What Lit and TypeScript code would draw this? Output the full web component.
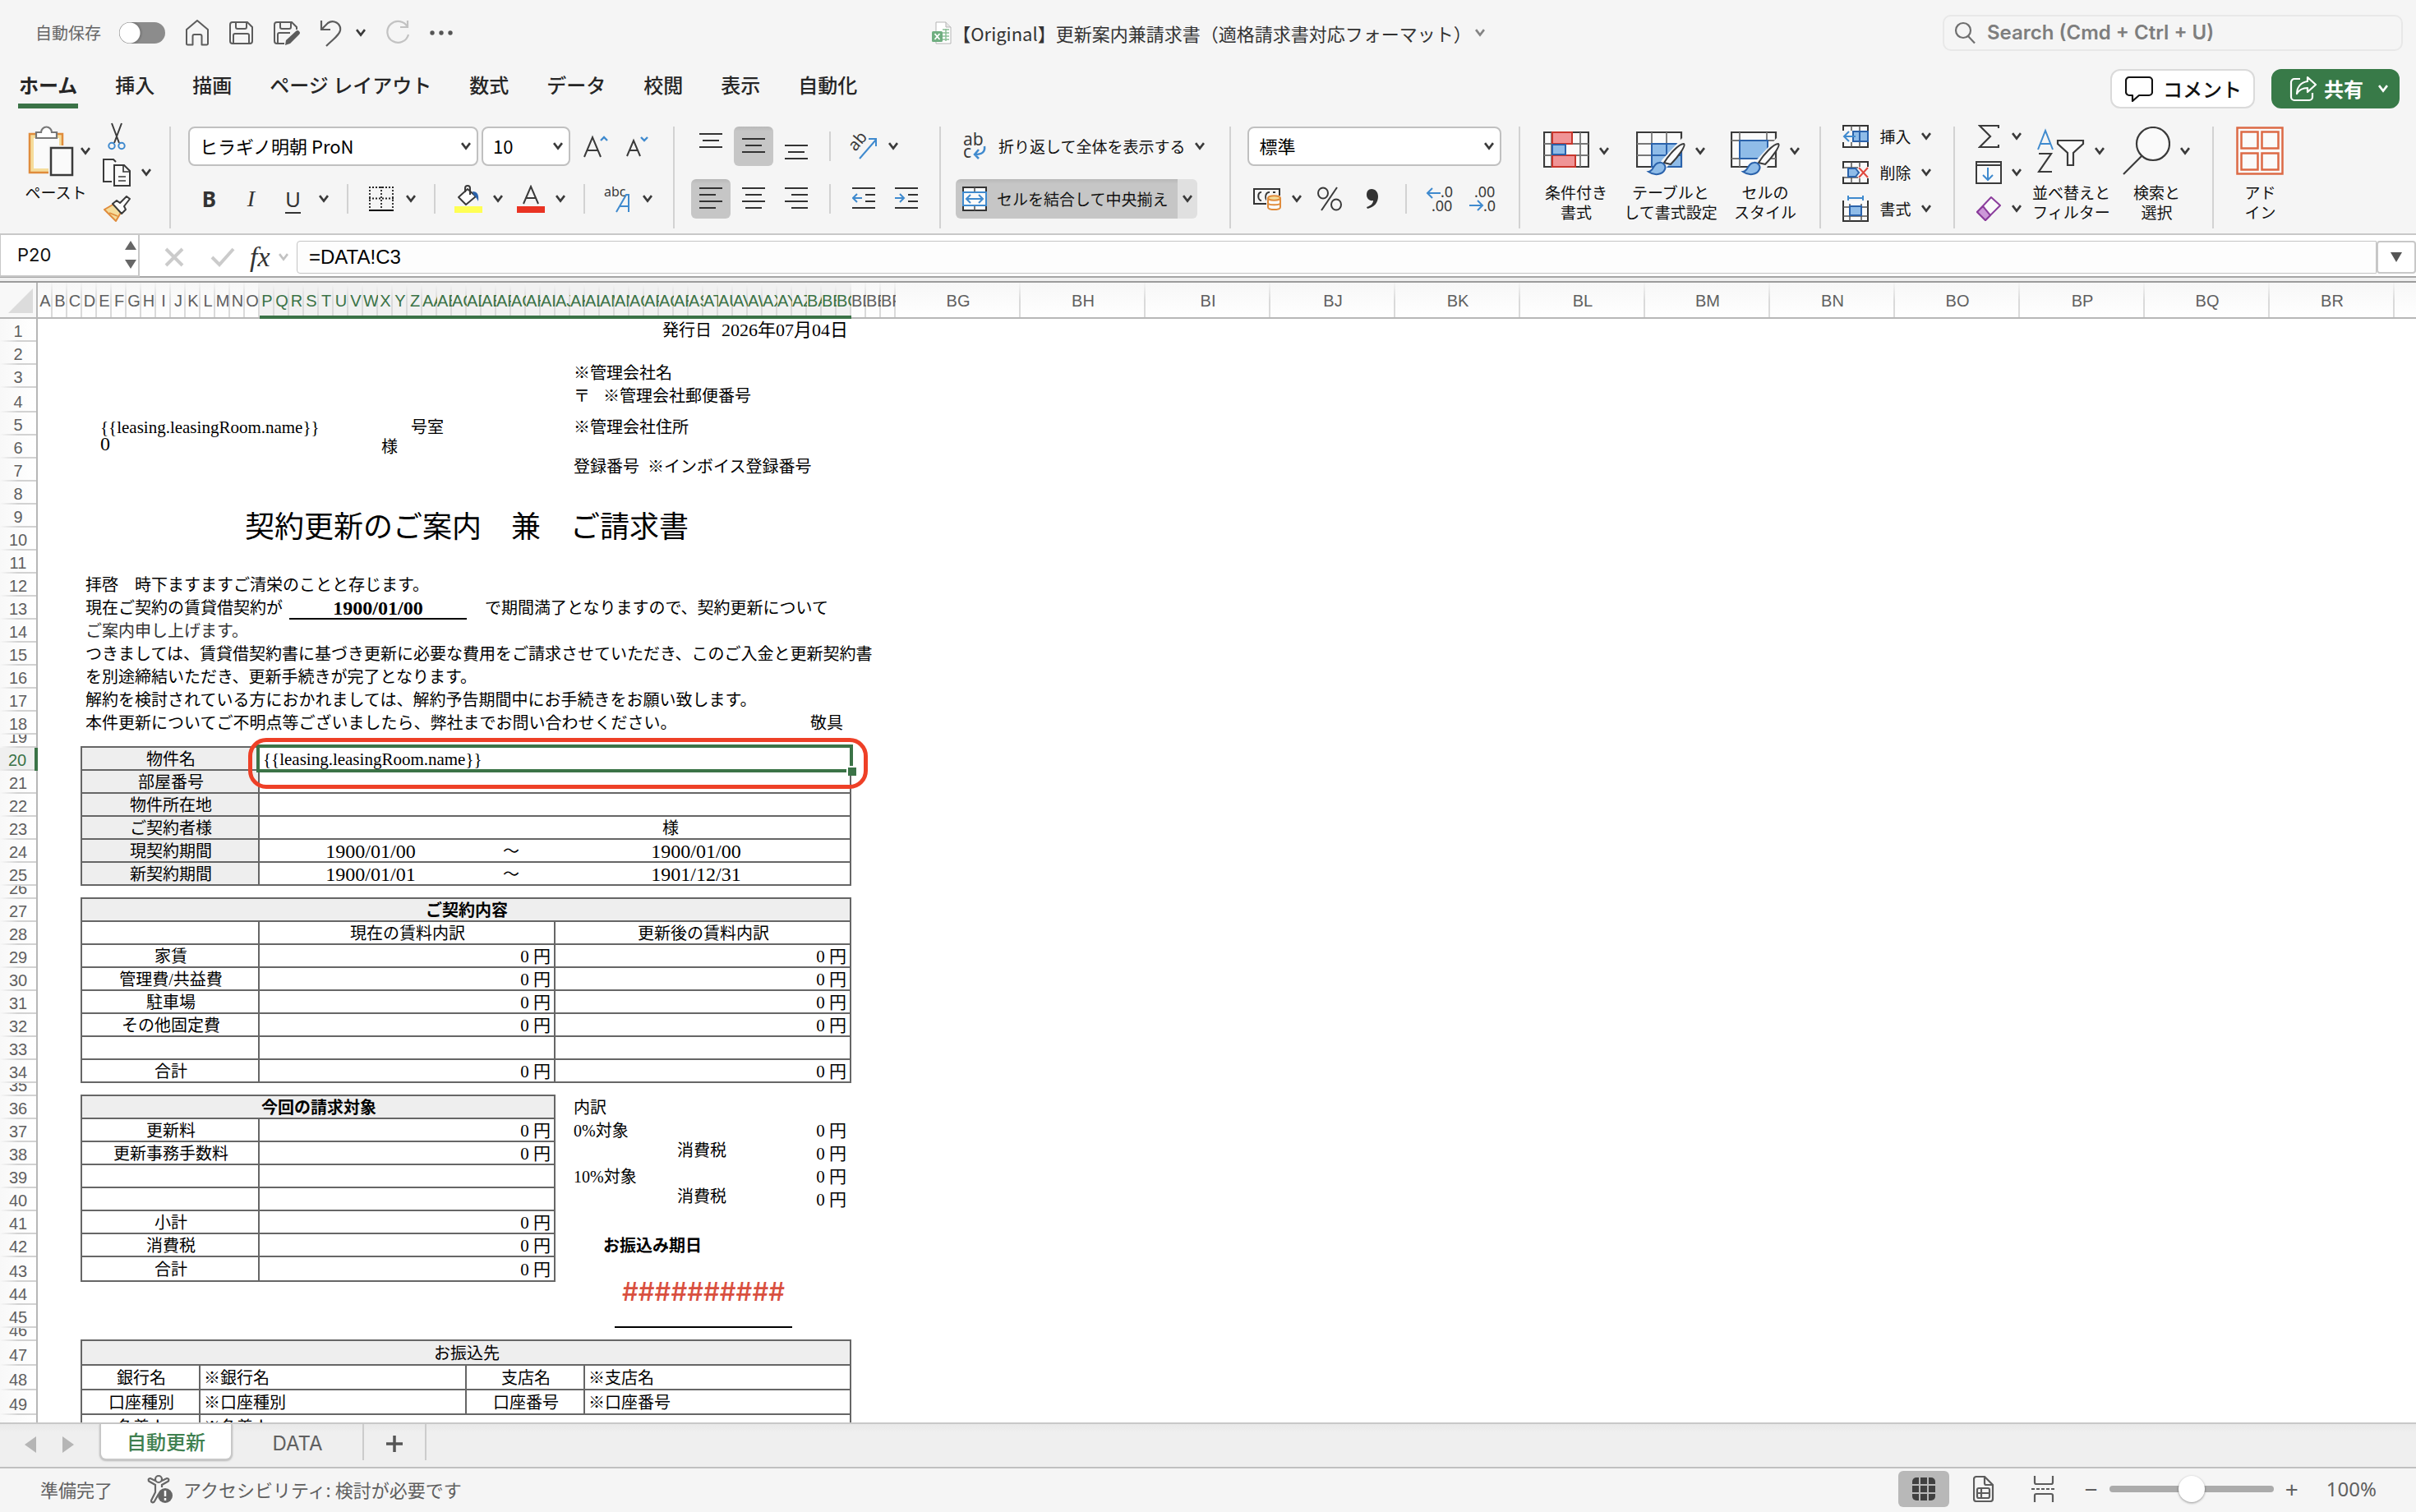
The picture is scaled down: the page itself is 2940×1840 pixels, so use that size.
import { LitElement, css, html, nothing } from 'lit'
import { customElement, property, state } from 'lit/decorators.js'
import { classMap } from 'lit/directives/class-map.js'

type Cell = {
  row: number
  from: number
  to: number
  text: string
  kind?: string
  rows?: number
}

const NARROW_COUNT = 58
const NARROW = 18
const WIDE_COUNT = 13
const WIDE = 152
const HEAD = 46
const ROW_COUNT = 50
const SHORT_ROWS = [19, 26, 35, 46]
const TALL_ROWS = [4, 43, 47, 48, 49, 50]
const ACTIVE = { row: 20, from: 15, to: 55 }

const tabs = ['ホーム', '挿入', '描画', 'ページ レイアウト', '数式', 'データ', '校閲', '表示', '自動化']

function c(row: number, from: number, to: number, text: string, kind = '', rows = 1): Cell {
  return { row, from, to, text, kind, rows }
}

function yenRow(row: number, label: string, amounts: boolean): Cell[] {
  const text = amounts ? '0 円' : ''
  return [
    c(row, 3, 15, label, 'box center'),
    c(row, 15, 35, text, 'box right latin'),
    c(row, 35, 55, text, 'box right latin'),
  ]
}

function billRow(row: number, label: string, amounts: boolean): Cell[] {
  return yenRow(row, label, amounts).slice(0, 2)
}

const cells: Cell[] = [
  c(1, 42, 46, '発行日'),
  c(1, 46, 55, '2026年07月04日', 'right issued'),
  c(3, 36, 55, '※管理会社名', 'top'),
  c(4, 36, 38, '〒', 'top'),
  c(4, 38, 55, '※管理会社郵便番号', 'top'),
  c(5, 4, 25, '{{leasing.leasingRoom.name}}', 'bottom latin'),
  c(5, 25, 36, '号室', 'bottom'),
  c(5, 36, 55, '※管理会社住所', 'bottom'),
  c(6, 4, 23, '0', 'top date'),
  c(6, 23, 36, '様'),
  c(7, 36, 41, '登録番号', 'top'),
  c(7, 41, 55, '※インボイス登録番号', 'top'),
  c(9, 3, 55, '契約更新のご案内　兼　ご請求書', 'center title', 2),
  c(12, 3, 55, '拝啓　時下ますますご清栄のことと存じます。'),
  c(13, 3, 17, '現在ご契約の賃貸借契約が'),
  c(13, 17, 29, '1900/01/00', 'center date bold under'),
  c(13, 30, 55, 'で期間満了となりますので、契約更新について'),
  c(14, 3, 55, 'ご案内申し上げます。', 'soft'),
  c(15, 3, 55, 'つきましては、賃貸借契約書に基づき更新に必要な費用をご請求させていただき、このご入金と更新契約書'),
  c(16, 3, 55, 'を別途締結いただき、更新手続きが完了となります。'),
  c(17, 3, 55, '解約を検討されている方におかれましては、解約予告期間中にお手続きをお願い致します。'),
  c(18, 3, 52, '本件更新についてご不明点等ございましたら、弊社までお問い合わせください。'),
  c(18, 52, 55, '敬具'),

  c(20, 3, 15, '物件名', 'box fill center'),
  c(20, 15, 55, '{{leasing.leasingRoom.name}}', 'box latin'),
  c(21, 3, 15, '部屋番号', 'box fill center'),
  c(21, 15, 55, '', 'box'),
  c(22, 3, 15, '物件所在地', 'box fill center'),
  c(22, 15, 55, '', 'box'),
  c(23, 3, 15, 'ご契約者様', 'box fill center'),
  c(23, 15, 42, '', 'row-line'),
  c(23, 42, 55, '様', 'row-line end-line'),
  c(24, 3, 15, '現契約期間', 'box fill center'),
  c(24, 15, 30, '1900/01/00', 'row-line center date'),
  c(24, 30, 34, '〜', 'row-line center'),
  c(24, 34, 55, '1900/01/00', 'row-line end-line center date'),
  c(25, 3, 15, '新契約期間', 'box fill center'),
  c(25, 15, 30, '1900/01/01', 'row-line center date'),
  c(25, 30, 34, '〜', 'row-line center'),
  c(25, 34, 55, '1901/12/31', 'row-line end-line center date'),

  c(27, 3, 55, 'ご契約内容', 'box fill center bold'),
  c(28, 3, 15, '', 'box'),
  c(28, 15, 35, '現在の賃料内訳', 'box center'),
  c(28, 35, 55, '更新後の賃料内訳', 'box center'),
  ...yenRow(29, '家賃', true),
  ...yenRow(30, '管理費/共益費', true),
  ...yenRow(31, '駐車場', true),
  ...yenRow(32, 'その他固定費', true),
  ...yenRow(33, '', false),
  ...yenRow(34, '合計', true),

  c(36, 3, 35, '今回の請求対象', 'box fill center bold'),
  c(36, 36, 55, '内訳'),
  ...billRow(37, '更新料', true),
  c(37, 36, 48, '0%対象'),
  c(37, 48, 55, '0 円', 'right latin'),
  ...billRow(38, '更新事務手数料', true),
  c(38, 43, 48, '消費税', 'top'),
  c(38, 48, 55, '0 円', 'right latin'),
  ...billRow(39, '', false),
  c(39, 36, 48, '10%対象'),
  c(39, 48, 55, '0 円', 'right latin'),
  ...billRow(40, '', false),
  c(40, 43, 48, '消費税', 'top'),
  c(40, 48, 55, '0 円', 'right latin'),
  ...billRow(41, '小計', true),
  ...billRow(42, '消費税', true),
  c(42, 38, 55, 'お振込み期日', 'bold'),
  ...billRow(43, '合計', true),
  c(44, 39, 51, '##########', 'center top overflowed under', 2),

  c(47, 3, 55, 'お振込先', 'box fill center'),
  c(48, 3, 11, '銀行名', 'box center'),
  c(48, 11, 29, '※銀行名', 'box'),
  c(48, 29, 37, '支店名', 'box center'),
  c(48, 37, 55, '※支店名', 'box'),
  c(49, 3, 11, '口座種別', 'box center'),
  c(49, 11, 29, '※口座種別', 'box'),
  c(49, 29, 37, '口座番号', 'box center'),
  c(49, 37, 55, '※口座番号', 'box'),
  c(50, 3, 11, '名義人', 'box center'),
  c(50, 11, 55, '※名義人', 'box'),
]

function columnName(index: number): string {
  const letter = (n: number) => String.fromCharCode(65 + n)
  return index < 26 ? letter(index) : letter(Math.floor(index / 26) - 1) + letter(index % 26)
}

function rowHeight(row: number): number {
  if (SHORT_ROWS.includes(row)) return 16
  if (TALL_ROWS.includes(row)) return 30
  return 28
}

function icon(name: string) {
  switch (name) {
    case 'chevron':
      return html`<svg width="12" height="10" viewBox="0 0 12 10" aria-hidden="true"><path d="M1 1.2 6 7.6l5-6.400" fill="none" stroke="#3a3a3a" stroke-width="2.7"/></svg>`
    case 'home':
      return html`<svg width="30" height="32" viewBox="0 0 30 32" fill="none" stroke="#5c5c5c" stroke-width="2" stroke-linejoin="round"><path d="M2 12 15 1l13 11v17a1.5 1.5 0 0 1-1.5 1.5h-6V20a2 2 0 0 0-2-2h-7a2 2 0 0 0-2 2v10.5h-6A1.5 1.5 0 0 1 2 29z"/></svg>`
    case 'save':
      return html`<svg width="30" height="30" viewBox="0 0 30 30" fill="none" stroke="#5c5c5c" stroke-width="2"><path d="M4 2h18l6 6v17a3 3 0 0 1-3 3H4a3 3 0 0 1-3-3V5a3 3 0 0 1 3-3z"/><path d="M8 2v6a2 2 0 0 0 2 2h9a2 2 0 0 0 2-2V2M5 28V18a2 2 0 0 1 2-2h15a2 2 0 0 1 2 2v10"/></svg>`
    case 'save-edit':
      return html`<svg width="32" height="32" viewBox="0 0 32 32" fill="none" stroke="#5c5c5c" stroke-width="2"><path d="M13 29H4a3 3 0 0 1-3-3V6a3 3 0 0 1 3-3h18l6 6v3"/><path d="M8 3v6a2 2 0 0 0 2 2h9a2 2 0 0 0 2-2V3M5 29V18a2 2 0 0 1 2-2h13"/><path d="M14 31l1-6L27 14a2.500 2.500 0 0 1 4 4L20 29z" fill="#5c5c5c" stroke="none"/></svg>`
    case 'undo':
      return html`<svg width="28" height="34" viewBox="0 0 28 34" fill="none" stroke="#5c5c5c" stroke-width="2.2"><path d="M2 2v11h11"/><path d="M2 13 10 5a9.500 9.500 0 0 1 15 9c-1 6-8 10-17 19"/></svg>`
    case 'redo':
      return html`<svg width="30" height="32" viewBox="0 0 30 32" fill="none" stroke="#c2c2c2" stroke-width="2.2"><path d="M18 9h9V1"/><path d="M27 9A13 13 0 1 0 28 18"/></svg>`
    case 'dots':
      return html`<svg width="28" height="8" viewBox="0 0 28 8" fill="#555"><circle cx="3" cy="4" r="2.7"/><circle cx="14" cy="4" r="2.7"/><circle cx="25" cy="4" r="2.7"/></svg>`
    case 'file':
      return html`<svg width="26" height="28" viewBox="0 0 26 28"><path d="M6 1h12l6 6v20H6z" fill="#fff" stroke="#b5b5b5"/><path d="M18 1v6h6" fill="#e6e6e6" stroke="#b5b5b5"/><path d="M14 10h8M14 14h8M14 18h8M14 22h8M18 9v15" stroke="#8bbf97" stroke-width="1.5"/><rect x="1" y="12" width="13" height="13" rx="1.5" fill="#6fae80"/><path d="m4.500 15 6 7m0-7-6 7" stroke="#fff" stroke-width="1.8"/></svg>`
    case 'search':
      return html`<svg width="26" height="28" viewBox="0 0 26 28" fill="none" stroke="#6f6f6f" stroke-width="2.2"><circle cx="11" cy="11" r="9"/><path d="m17 18 8 8.500"/></svg>`
    case 'comment':
      return html`<svg width="34" height="32" viewBox="0 0 34 32" fill="none" stroke="#111" stroke-width="2.2" stroke-linejoin="round"><path d="M5 2h24a4 4 0 0 1 4 4v14a4 4 0 0 1-4 4H17l-8 7v-7H5a4 4 0 0 1-4-4V6a4 4 0 0 1 4-4z"/></svg>`
    case 'share':
      return html`<svg width="34" height="32" viewBox="0 0 34 32" fill="none" stroke="#fff" stroke-width="2.2" stroke-linejoin="round"><path d="M13 4H6a4 4 0 0 0-4 4v18a4 4 0 0 0 4 4h18a4 4 0 0 0 4-4v-5"/><path d="M22 2l10 9-10 9v-5c-6 0-10 2-13 7 0-8 5-14 13-15z"/></svg>`
    case 'paste':
      return html`<svg width="56" height="62" viewBox="0 0 56 62"><path d="M2 10h40v47H2z" fill="#f5dc9b" stroke="#e08c3c" stroke-width="2.5"/><path d="M7 15h31v37H7z" fill="#fafafa"/><path d="M10 15V8h6a6.500 6.500 0 0 1 13 0h6v7z" fill="#fff" stroke="#777" stroke-width="2.2"/><path d="M25 24h31v38H25z" fill="#f5f5f5"/><path d="M28 27h26v33H28z" fill="#fafafa" stroke="#3a3a3a" stroke-width="2.5"/></svg>`
    case 'cut':
      return html`<svg width="22" height="34" viewBox="0 0 22 34" fill="none" stroke-width="2"><path d="M5 1 14 25M17 1 8 25" stroke="#3a3a3a"/><circle cx="5" cy="28.5" r="3.7" stroke="#3f8ace"/><circle cx="17" cy="28.5" r="3.7" stroke="#3f8ace"/></svg>`
    case 'copy':
      return html`<svg width="34" height="34" viewBox="0 0 34 34" fill="#fafafa" stroke="#3a3a3a" stroke-width="2"><path d="M11 28H1V1h12l3 3"/><path d="M14 8h12l7 7v18H14z"/><path d="M25 8v8h8M19 22h9M19 27h9" fill="none" stroke-width="1.7"/></svg>`
    case 'painter':
      return html`<svg width="34" height="32" viewBox="0 0 34 32"><path d="M2 17 14 10l9 9-7 12z" fill="#f5dc9b" stroke="#e08c3c" stroke-width="2" stroke-linejoin="round"/><path d="m8 21 10 4" stroke="#e08c3c" stroke-width="1.8"/><path d="m12 10 5-4 4 3 8-8 4 3-7 9 2 4-5 5z" fill="#fafafa" stroke="#3a3a3a" stroke-width="2" stroke-linejoin="round"/></svg>`
    case 'grow':
      return html`<svg width="30" height="30" viewBox="0 0 30 30" fill="none"><path d="M1 28 11 4l10 24M4.500 20h13" stroke="#3a3a3a" stroke-width="2"/><path d="m21 8 4-4 4 4" stroke="#3f8ace" stroke-width="2.4"/></svg>`
    case 'shrink':
      return html`<svg width="30" height="30" viewBox="0 0 30 30" fill="none"><path d="M1 27 9 8l8 19M4 20h10" stroke="#3a3a3a" stroke-width="2"/><path d="m18 4 4 4 4-4" stroke="#3f8ace" stroke-width="2.4"/></svg>`
    case 'borders':
      return html`<svg width="32" height="32" viewBox="0 0 32 32" fill="none" stroke="#222"><path d="M1 2h30M1 15.500h30" stroke-width="1.8" stroke-dasharray="2 2"/><path d="M2 1v27M16 1v27M30 1v27" stroke-width="1.8" stroke-dasharray="2 2"/><path d="M1 30h30" stroke="#000" stroke-width="2"/></svg>`
    case 'fill':
      return html`<svg width="34" height="34" viewBox="0 0 34 34"><path d="M16 5 26 14 14 24 5 15z" fill="#fff" stroke="#3a3a3a" stroke-width="2" stroke-linejoin="round"/><path d="M13 9V4a3 3 0 0 1 6 0v8" fill="none" stroke="#3a3a3a" stroke-width="2"/><path d="M22 8c6 0 8 4 7 12-2-4-4-7-6-8z" fill="#2a62ab"/><path d="M0 26h34v8H0z" fill="#ffff54"/></svg>`
    case 'color':
      return html`<svg width="34" height="34" viewBox="0 0 34 34"><path d="m8 23 9-21 9 21M11 16h12" fill="none" stroke="#3a3a3a" stroke-width="2"/><path d="M0 26h34v8H0z" fill="#e93323"/></svg>`
    case 'top':
      return html`<svg width="28" height="32" viewBox="0 0 28 32" stroke="#333" stroke-width="2"><path d="M0 1h28M4 9h20M0 17h28"/></svg>`
    case 'middle':
      return html`<svg width="28" height="32" viewBox="0 0 28 32" stroke="#333" stroke-width="2"><path d="M0 7h28M4 15h20M0 23h28"/></svg>`
    case 'bottom':
      return html`<svg width="28" height="32" viewBox="0 0 28 32" stroke="#333" stroke-width="2"><path d="M0 15h28M4 23h20M0 31h28"/></svg>`
    case 'left':
      return html`<svg width="28" height="28" viewBox="0 0 28 28" stroke="#333" stroke-width="2"><path d="M0 1h28M0 9h20M0 17h28M0 25h20"/></svg>`
    case 'center':
      return html`<svg width="28" height="28" viewBox="0 0 28 28" stroke="#333" stroke-width="2"><path d="M0 1h28M4 9h20M0 17h28M4 25h20"/></svg>`
    case 'right':
      return html`<svg width="28" height="28" viewBox="0 0 28 28" stroke="#333" stroke-width="2"><path d="M0 1h28M8 9h20M0 17h28M8 25h20"/></svg>`
    case 'outdent':
      return html`<svg width="28" height="28" viewBox="0 0 28 28" fill="none" stroke="#333" stroke-width="2"><path d="M0 1h28M16 9h12M16 17h12M0 25h28"/><path d="M12 13H1m5-5-5 5 5 5" stroke="#3f8ace"/></svg>`
    case 'indent':
      return html`<svg width="28" height="28" viewBox="0 0 28 28" fill="none" stroke="#333" stroke-width="2"><path d="M0 1h28M16 9h12M16 17h12M0 25h28"/><path d="M0 13h11m-5-5 5 5-5 5" stroke="#3f8ace"/></svg>`
    case 'merge':
      return html`<svg width="30" height="30" viewBox="0 0 30 30" fill="#fafafa"><path d="M1 1h28v28H1z" stroke="#333" stroke-width="2"/><path d="M15 1v5M15 24v5" stroke="#555" stroke-width="1.6"/><path d="M1 7h28v16H1z" stroke="#3f8ace" stroke-width="2"/><path d="M5 15h20M10 10l-5 5 5 5M20 10l5 5-5 5" fill="none" stroke="#3f8ace" stroke-width="2"/></svg>`
    case 'currency':
      return html`<svg width="34" height="28" viewBox="0 0 34 28" fill="none"><path d="M1 2h31v18H1z" stroke="#333" stroke-width="2"/><path d="M10 6c-5-1-5 10 0 10M20 6c-6-1-6 10-2 10M24 6h3" stroke="#333" stroke-width="2"/><path d="M16 10h18v18H16z" fill="#f5f5f5"/><path d="M18 13v11c0 4 15 4 15 0V13" fill="#fafafa" stroke="#e08c3c" stroke-width="2"/><ellipse cx="25.5" cy="13" rx="7.5" ry="2.8" fill="#f5dc9b" stroke="#e08c3c" stroke-width="2"/><path d="M18 19c0 3 15 3 15 0" stroke="#e08c3c" stroke-width="2"/></svg>`
    case 'percent':
      return html`<svg width="32" height="30" viewBox="0 0 32 30" fill="none" stroke="#3a3a3a" stroke-width="2"><ellipse cx="8" cy="8" rx="6" ry="6.5"/><ellipse cx="24" cy="22" rx="6" ry="6.5"/><path d="M25 1 6 29"/></svg>`
    case 'comma':
      return html`<svg width="16" height="26" viewBox="0 0 16 26"><path d="M7 1c5 0 8 4 8 9 0 7-4 13-13 15l-1-2c6-2 8-5 8-8-5 1-8-3-8-7s2-7 6-7z" fill="#333"/></svg>`
    case 'conditional':
      return html`<svg width="56" height="60" viewBox="0 0 56 60"><path d="M1 7h54v42H1z" fill="#fafafa" stroke="#3a3a3a" stroke-width="2.2"/><path d="M1 21h54M1 35h54M10 7v42M45 7v42" stroke="#777" stroke-width="1.8"/><path d="M11 7h24v14H11zM11 35h28v14H11z" fill="#f09496" stroke="#c8362c" stroke-width="2"/><path d="M11 22h16v12H11z" fill="#8fbce8" stroke="#2a62ab" stroke-width="2"/></svg>`
    case 'table':
      return html`<svg width="60" height="60" viewBox="0 0 60 60"><path d="M1 7h54v42H1z" fill="#fafafa" stroke="#3a3a3a" stroke-width="2.2"/><path d="M1 21h54M1 35h54M19 7v42M37 7v42" stroke="#777" stroke-width="1.8"/><path d="M19 21h36v28H19z" fill="#8fbce8" stroke="#2a62ab" stroke-width="2"/><path d="M19 35h36M37 21v28" stroke="#2a62ab" stroke-width="2"/><path d="M60 17 42 44 32 56 22 54 32 40 56 14z" fill="#f5f5f5"/><path d="M34 44C40 34 52 21 58 21c3 2-7 16-16 25z" fill="#fafafa" stroke="#3a3a3a" stroke-width="2"/><path d="M15 55c7-1 5-10 13-11 5-1 9 4 7 8-3 7-13 8-20 3z" fill="#8fbce8" stroke="#2a62ab" stroke-width="2"/></svg>`
    case 'styles':
      return html`<svg width="60" height="60" viewBox="0 0 60 60"><path d="M1 7h54v42H1z" fill="#fafafa" stroke="#3a3a3a" stroke-width="2.2"/><path d="M1 17h54M1 39h54M11 7v42M44 7v42" stroke="#777" stroke-width="1.8"/><path d="M11 17h34v22H11z" fill="#8fbce8" stroke="#2a62ab" stroke-width="2"/><path d="M60 17 44 50 32 56 22 54 32 40 56 14z" fill="#f5f5f5"/><path d="M34 44C40 34 52 21 58 21c3 2-7 16-16 25z" fill="#fafafa" stroke="#3a3a3a" stroke-width="2"/><path d="M15 55c7-1 5-10 13-11 5-1 9 4 7 8-3 7-13 8-20 3z" fill="#8fbce8" stroke="#2a62ab" stroke-width="2"/></svg>`
    case 'insert':
      return html`<svg width="32" height="30" viewBox="0 0 32 30" fill="none"><path d="M1 2h30v26H1z" fill="#fafafa" stroke="#333" stroke-width="2"/><path d="M11 2v26M21 2v26" stroke="#555" stroke-width="1.5"/><path d="M0 8h12v14H0z" fill="#f5f5f5"/><path d="M13 9h18v12H13z" fill="#8fbce8" stroke="#2a62ab" stroke-width="2"/><path d="M21 9v12" stroke="#2a62ab" stroke-width="2"/><path d="M16 15H2m6-6-6 6 6 6" stroke="#3f8ace" stroke-width="2"/></svg>`
    case 'delete':
      return html`<svg width="32" height="30" viewBox="0 0 32 30" fill="none"><path d="M1 2h30v26H1z" fill="#fafafa" stroke="#333" stroke-width="2"/><path d="M11 2v26M21 2v26M1 9h30M1 21h30" stroke="#555" stroke-width="1.5"/><path d="M0 10h6v10H0zM19 8h13v14H19z" fill="#f5f5f5"/><path d="M7 10h9l4 5-4 5H7z" fill="#8fbce8" stroke="#2a62ab" stroke-width="2"/><path d="m20 9 11 12M31 9 20 21" stroke="#e0473c" stroke-width="2"/></svg>`
    case 'format':
      return html`<svg width="32" height="32" viewBox="0 0 32 32" fill="none"><path d="M1 6v25h30V6" fill="#fafafa" stroke="#333" stroke-width="2"/><path d="M9 10v21M23 10v21M1 14h30M1 25h30" stroke="#555" stroke-width="1.5"/><path d="M9 13h14v11H9z" fill="#8fbce8" stroke="#2a62ab" stroke-width="2"/><path d="M7 3h18M7 0v6M25 0v6" stroke="#3f8ace" stroke-width="2"/></svg>`
    case 'sum':
      return html`<svg width="26" height="30" viewBox="0 0 26 30" fill="none" stroke="#3a3a3a" stroke-width="2.2"><path d="M25 5V2H2l13 13L2 28h23v-3"/></svg>`
    case 'down':
      return html`<svg width="32" height="30" viewBox="0 0 32 30" fill="#fafafa"><path d="M1 2h30v26H1z" stroke="#3a3a3a" stroke-width="2"/><path d="M1 6h30" stroke="#3a3a3a" stroke-width="2"/><path d="M15 9v15m-6-6 6 6 6-6" fill="none" stroke="#3f8ace" stroke-width="2"/></svg>`
    case 'eraser':
      return html`<svg width="32" height="32" viewBox="0 0 32 32" stroke="#8b3d9c" stroke-width="2" stroke-linejoin="round"><path d="M19 2 30 12 12 30 2 20z" fill="#fafafa"/><path d="m9 13 9 11-6 6L2 20z" fill="#cc98d8"/></svg>`
    case 'sort':
      return html`<svg width="58" height="56" viewBox="0 0 58 56" fill="none"><path d="m1 26 9-23 9 23M4 19h12" stroke="#3f8ace" stroke-width="2"/><path d="M2 31h15L2 53h16" stroke="#3a3a3a" stroke-width="2.2"/><path d="M25 15h31v4L44 30v15h-7V30L25 19z" fill="#fafafa" stroke="#3a3a3a" stroke-width="2.2"/></svg>`
    case 'find':
      return html`<svg width="58" height="60" viewBox="0 0 58 60"><circle cx="37" cy="21" r="20" fill="#fafafa" stroke="#3a3a3a" stroke-width="2.2"/><path d="M23 36 1 58" stroke="#3a3a3a" stroke-width="2.2"/></svg>`
    case 'addin':
      return html`<svg width="58" height="60" viewBox="0 0 58 60" fill="#fafafa" stroke="#dc6a45" stroke-width="2.5"><path d="M1.500 1.500h55v56h-55z"/><path d="M6.500 6.500h20v20h-20zM31.500 6.500h20v20h-20zM6.500 32.500h20v20h-20zM31.500 32.500h20v20h-20z"/></svg>`
    case 'cancel':
      return html`<svg width="24" height="24" viewBox="0 0 24 24" stroke="#cbcbcb" stroke-width="4"><path d="m2 2 20 20M22 2 2 22"/></svg>`
    case 'enter':
      return html`<svg width="30" height="24" viewBox="0 0 30 24" fill="none" stroke="#cbcbcb" stroke-width="4"><path d="m2 12 9 9L28 2"/></svg>`
    case 'spinner':
      return html`<svg width="14" height="34" viewBox="0 0 14 34" fill="#666"><path d="M0 11 7 0l7 11zM0 23h14L7 34z"/></svg>`
    case 'caret':
      return html`<svg width="14" height="12" viewBox="0 0 14 12" fill="#555"><path d="M0 0h14L7 12z"/></svg>`
    case 'prev':
      return html`<svg width="16" height="22" viewBox="0 0 16 22" fill="#b5b5b5"><path d="M15 1v20L1 11z"/></svg>`
    case 'next':
      return html`<svg width="16" height="22" viewBox="0 0 16 22" fill="#b5b5b5"><path d="M1 1v20l14-10z"/></svg>`
    case 'plus':
      return html`<svg width="20" height="20" viewBox="0 0 20 20" stroke="#555" stroke-width="3.5"><path d="M10 0v20M0 10h20"/></svg>`
    case 'access':
      return html`<svg width="32" height="36" viewBox="0 0 32 36" fill="none" stroke="#666" stroke-width="2.2"><circle cx="14" cy="6" r="4"/><path d="M10 8 4 5c-3 0-3 3-1 4l7 4v9L5 32c0 3 3 3 4 1l5-9M18 8l6-3c3 0 3 3 1 4l-7 4v3"/><circle cx="22" cy="26" r="9" fill="#666" stroke="none"/><path d="M22 20v7M22 29v3" stroke="#fff" stroke-width="2.5"/></svg>`
    case 'grid':
      return html`<svg width="28" height="28" viewBox="0 0 28 28"><rect width="28" height="28" rx="5" fill="#404040"/><path d="M9 0v28M19 0v28M0 9h28M0 19h28" stroke="#b8b8b8" stroke-width="2"/></svg>`
    case 'page':
      return html`<svg width="26" height="32" viewBox="0 0 26 32" fill="none" stroke="#5c5c5c" stroke-width="2.2"><path d="M4 1h10l10 10v17a3 3 0 0 1-3 3H4a3 3 0 0 1-3-3V4a3 3 0 0 1 3-3z"/><path d="M14 1v8a2 2 0 0 0 2 2h8"/><rect x="5" y="15" width="15" height="12" rx="2"/><path d="M10 15v12M5 21h15"/></svg>`
    case 'breaks':
      return html`<svg width="30" height="32" viewBox="0 0 30 32" fill="none" stroke="#5c5c5c" stroke-width="2.2"><path d="M4 0v8a2 2 0 0 0 2 2h18a2 2 0 0 0 2-2V0M4 32v-8a2 2 0 0 1 2-2h18a2 2 0 0 1 2 2v8"/><path d="M0 16h30" stroke-dasharray="4 2"/></svg>`
    default:
      return nothing
  }
}

@customElement('sheet-grid')
class SheetGrid extends LitElement {
  static styles = css`
    :host {
      display: block;
      min-width: 0;
      min-height: 0;
      overflow: hidden;
      background: #fff;
    }

    table {
      table-layout: fixed;
      border-collapse: separate;
      border-spacing: 0;
      color: #000;
      font: 20px/20px 'Hiragino Mincho ProN', 'Liberation Serif', 'Noto Sans CJK JP', serif;
    }

    th,
    td {
      box-sizing: border-box;
      padding: 0;
      white-space: nowrap;
    }

    th {
      color: #606060;
      font: 20px/20px 'Liberation Sans', sans-serif;
    }

    .column {
      height: 44px;
      background:
        linear-gradient(#b7b7b7, #b7b7b7) bottom / 100% 2px no-repeat,
        linear-gradient(#f4f4f4, #dadada 50%) right / 2px 100% no-repeat,
        linear-gradient(#f7f7f7, #fff);
    }

    .column.selected {
      background:
        linear-gradient(#3b7347, #3b7347) bottom / 100% 4px no-repeat,
        linear-gradient(#f4f4f4, #dadada 50%) right / 2px 100% no-repeat,
        #f1f1f1;
      color: #3b7347;
    }

    .column span {
      display: flex;
      justify-content: safe center;
      align-items: center;
      overflow: hidden;
      height: 44px;
    }

    .corner {
      border-right: 2px solid #b7b7b7;
      background: linear-gradient(#b7b7b7, #b7b7b7) bottom / 100% 2px no-repeat, #f8f8f8;
    }

    .corner svg {
      display: block;
      margin-left: 10px;
    }

    .row {
      border-right: 2px solid #b7b7b7;
      background: linear-gradient(90deg, #f8f8f8, #fff);
    }

    .row span {
      display: flex;
      box-sizing: border-box;
      overflow: hidden;
      justify-content: center;
      align-items: flex-end;
      padding-bottom: 3px;
      background: linear-gradient(90deg, #fff0, #d2d2d2 50%) bottom / 100% 2px no-repeat;
    }

    .row.selected {
      border-right: 4px solid #3b7347;
      background: #efefef;
      color: #3b7347;
    }

    td {
      padding: 0 4px;
      text-align: left;
      vertical-align: middle;
    }

    .box {
      box-shadow: inset -2px -2px 0 #666, 0 -2px 0 #666, -2px 0 0 #666, -2px -2px 0 #666;
    }

    .row-line {
      box-shadow: inset 0 -2px 0 #666;
    }

    .end-line {
      box-shadow: inset -2px -2px 0 #666;
    }

    .fill {
      background: #eee;
    }

    .center {
      text-align: center;
    }

    .right {
      padding-right: 6px;
      text-align: right;
    }

    .top {
      vertical-align: top;
    }

    .bottom {
      vertical-align: bottom;
    }

    .bold {
      font-weight: 700;
    }

    .soft {
      color: #333;
    }

    .latin {
      font-size: 21px;
    }

    .issued {
      font-size: 22px;
    }

    .date {
      font-size: 24px;
    }

    .title {
      font-size: 36px;
      line-height: 40px;
    }

    .under {
      box-shadow: inset 0 -2px 0 #000;
    }

    .overflowed {
      color: #d9503f;
      font: 500 31px/24px Inter, sans-serif;
    }

    .active {
      position: relative;
    }

    .selection {
      position: absolute;
      z-index: 1;
      inset: -4px -2px -2px -4px;
      border: 4px solid #3b7347;
    }

    .handle {
      position: absolute;
      z-index: 1;
      right: -6px;
      bottom: -6px;
      width: 10px;
      height: 10px;
      border: 2px solid #fff;
      border-right: 0;
      border-bottom: 0;
      background: #3b7347;
    }

    .callout {
      position: absolute;
      z-index: 2;
      inset: -12px -20px -22px -14px;
      border: 5px solid #ee4027;
      border-radius: 22px;
    }
  `

  private renderHead() {
    const names = Array.from({ length: NARROW_COUNT + WIDE_COUNT }, (_, i) => i)
    return html`
      <thead>
        <tr>
          <th class="corner"><svg width="30" height="30" viewBox="0 0 30 30"><path d="M30 0v30H0z" fill="#dcdcdc"/></svg></th>
          ${names.map((i) => html`<th scope="col" class=${classMap({
            column: true,
            selected: i >= ACTIVE.from && i < ACTIVE.to,
          })}><span>${columnName(i)}</span></th>`)}
        </tr>
      </thead>
    `
  }

  private renderCell(cell: Cell) {
    const active = cell.row === ACTIVE.row && cell.from === ACTIVE.from
    return html`<td class="${cell.kind} ${active ? 'active' : ''}" colspan=${cell.to - cell.from} rowspan=${cell.rows ?? 1}>${cell.text}${active
      ? html`<span class="selection"></span><span class="handle"></span><span class="callout"></span>`
      : nothing}</td>`
  }

  private renderRow(row: number) {
    const height = rowHeight(row)
    // Cells spanning down from the row above take up columns here too.
    const items = cells
      .filter((cell) => cell.row === row || ((cell.rows ?? 1) > 1 && cell.row === row - 1))
      .sort((a, b) => a.from - b.from)
    const out: unknown[] = []
    let column = 0
    for (const cell of items) {
      if (cell.from > column) out.push(html`<td colspan=${cell.from - column}></td>`)
      if (cell.row === row) out.push(this.renderCell(cell))
      column = cell.to
    }
    out.push(html`<td colspan=${NARROW_COUNT + WIDE_COUNT - column}></td>`)
    return html`
      <tr style="height:${height}px">
        <th scope="row" class=${classMap({ row: true, selected: row === ACTIVE.row })}>
          <span style="height:${height}px">${row}</span>
        </th>
        ${out}
      </tr>
    `
  }

  render() {
    const width = HEAD + NARROW_COUNT * NARROW + WIDE_COUNT * WIDE
    return html`
      <table style="width:${width}px">
        <colgroup>
          <col style="width:${HEAD}px" />
          <col span=${NARROW_COUNT} style="width:${NARROW}px" />
          <col span=${WIDE_COUNT} style="width:${WIDE}px" />
        </colgroup>
        ${this.renderHead()}
        <tbody>
          ${Array.from({ length: ROW_COUNT }, (_, i) => this.renderRow(i + 1))}
        </tbody>
      </table>
    `
  }
}

@customElement('app-root')
class AppRoot extends LitElement {
  @property() fileName = '【Original】更新案内兼請求書（適格請求書対応フォーマット）'
  @state() private tab = 'ホーム'
  @state() private zoom = 100

  static styles = css`
    :host {
      display: grid;
      grid-template-rows: 80px 56px 150px 58px 1fr 56px 53px;
      grid-template-columns: minmax(0, 1fr);
      height: 100vh;
      overflow: hidden;
      background: #f5f5f5;
      color: #111;
      font: 19px/24px 'Noto Sans CJK JP', sans-serif;
    }

    button,
    input,
    select {
      margin: 0;
      padding: 0;
      border: 0;
      background: none;
      color: inherit;
      font: inherit;
      outline: 0;
    }

    button {
      display: flex;
      align-items: center;
      justify-content: center;
      flex: none;
      white-space: nowrap;
    }

    svg {
      display: block;
      flex: none;
    }

    .titlebar {
      display: grid;
      grid-template-columns: minmax(0, 1fr) auto minmax(0, 1fr);
      align-items: center;
      padding: 0 16px;
      color: #666;
      font-size: 20px;
    }

    .quick {
      display: flex;
      align-items: center;
      gap: 24px;
      padding-left: 27px;
    }

    .autosave {
      display: flex;
      align-items: center;
      gap: 22px;
    }

    .switch {
      appearance: none;
      width: 56px;
      height: 26px;
      border-radius: 13px;
      background: radial-gradient(circle at 13px 13px, #fff 12px, #6668 13px, #0000 16px), #8c8c8c;
    }

    .undo {
      gap: 16px;
    }

    .file {
      color: #333;
      font-size: 22px;
    }

    .file .chevron {
      margin-left: 4px;
      opacity: 0.6;
    }

    .search {
      display: flex;
      justify-self: end;
      align-items: center;
      gap: 14px;
      box-sizing: border-box;
      width: 560px;
      height: 44px;
      padding: 0 12px;
      border: 2px solid #e8e8e8;
      border-radius: 10px;
    }

    .search input {
      flex: 1;
      min-width: 0;
      font: 600 24px/28px Inter, sans-serif;
    }

    .search input::placeholder {
      color: #7e7e7e;
      opacity: 1;
    }

    .tabs {
      display: flex;
      align-items: flex-start;
      gap: 44px;
      padding: 0 20px 0 22px;
      color: #262626;
      font-size: 24px;
      font-weight: 500;
    }

    .tabs .tab {
      height: 52px;
      padding: 0 1px;
      border-bottom: 6px solid #0000;
      box-sizing: border-box;
    }

    .tabs .tab.current {
      border-bottom-color: #3b7347;
      font-weight: 700;
    }

    .actions {
      display: flex;
      gap: 20px;
      margin-left: auto;
      padding-top: 4px;
    }

    .action {
      box-sizing: border-box;
      height: 48px;
      gap: 12px;
      border-radius: 12px;
      padding: 0 14px 0 16px;
      border: 2px solid #dadada;
      background: #fff;
      color: #111;
      font-weight: 500;
    }

    .action.share {
      gap: 8px;
      padding: 0 12px 0 20px;
      border-color: #387a48;
      background: #387a48;
      color: #fff;
      font-weight: 700;
    }

    .share .chevron {
      margin-left: 10px;
      filter: brightness(0) invert(1);
    }

    .ribbon {
      display: flex;
      box-sizing: border-box;
      overflow: hidden;
      border-bottom: 2px solid #c8c8c8;
    }

    .divider {
      flex: none;
      width: 2px;
      height: 124px;
      margin-top: 18px;
      background: #d2d2d2;
    }

    .rule {
      flex: none;
      width: 2px;
      height: 36px;
      margin: 0 16px;
      background: #d2d2d2;
    }

    .group {
      display: flex;
      flex: none;
      box-sizing: border-box;
    }

    .rows {
      display: flex;
      flex-direction: column;
      gap: 16px;
      padding-top: 18px;
    }

    .line {
      display: flex;
      align-items: center;
      height: 48px;
    }

    .stack {
      display: flex;
      flex-direction: column;
      padding-top: 8px;
    }

    .stack .line {
      height: 44px;
    }

    .clipboard {
      padding: 0 16px 0 18px;
    }

    .fonts {
      padding: 0 18px 0 21px;
    }

    .aligning {
      padding: 0 16px 0 20px;
    }

    .wrapping {
      padding: 0 30px 0 18px;
    }

    .numbers {
      padding: 0 20px;
    }

    .looks {
      padding: 0 9px 0 10px;
    }

    .cells {
      padding: 0 27px 0 26px;
    }

    .editing {
      padding: 0 18px 0 23px;
      gap: 4px;
    }

    .addins {
      padding: 0 10px;
    }

    .tool {
      width: 48px;
      height: 48px;
      border-radius: 6px;
    }

    .stack .tool {
      height: 44px;
    }

    .editing .stack .tool {
      width: 36px;
      margin-right: 4px;
    }

    .more {
      width: 24px;
      height: 44px;
    }

    .letter {
      width: 51px;
      color: #333;
      font: 26px/32px 'Noto Sans', sans-serif;
    }

    .letter.b {
      font-weight: 700;
    }

    .letter.i {
      font-size: 28px;
      font-family: 'Liberation Serif', serif;
      font-style: italic;
    }

    .letter.u {
      text-decoration: underline;
      text-decoration-thickness: 2px;
      text-underline-offset: 6px;
    }

    .pressed {
      background: linear-gradient(#b8b8b8, #c6c6c6 12%);
    }

    .gap {
      margin-left: 4px;
    }

    .combo {
      position: relative;
      display: flex;
      align-items: center;
    }

    .combo select {
      appearance: none;
      box-sizing: border-box;
      width: 100%;
      height: 48px;
      padding: 0 0 2px 12px;
      border: 2px solid #c0c0c0;
      border-radius: 8px;
      background: #fff;
      color: #000;
      font-size: 22px;
    }

    .combo svg {
      position: absolute;
      right: 9px;
    }

    .family {
      width: 353px;
    }

    .size {
      width: 108px;
      margin: 0 7px 0 4px;
    }

    .number {
      width: 309px;
    }

    .wide {
      gap: 12px;
      height: 48px;
      padding-left: 8px;
      border-radius: 6px 0 0 6px;
    }

    .merge {
      width: 270px;
      justify-content: flex-start;
    }

    .merge-more {
      width: 24px;
      height: 48px;
      border-radius: 0 6px 6px 0;
      background: #e0e0e0;
    }

    .big {
      flex-direction: column;
      justify-content: flex-start;
      gap: 8px;
      width: 115px;
      padding-top: 18px;
    }

    .big .picture {
      display: flex;
      align-items: center;
      gap: 12px;
      height: 60px;
    }

    .clipboard .big,
    .editing .big {
      width: 100px;
    }

    .clipboard .picture {
      gap: 8px;
      padding-left: 8px;
    }

    .addins .big {
      width: 92px;
    }

    .named {
      gap: 13px;
      height: 44px;
    }

    .glyph text {
      font-family: 'Noto Sans', sans-serif;
      fill: #3a3a3a;
    }

    .formula {
      display: flex;
      align-items: flex-start;
      box-sizing: border-box;
      border-bottom: 2px solid #9c9c9c;
      background: linear-gradient(#fff 50px, #a6a6a6 50px, #a6a6a6 52px, #f0f0f0 52px);
    }

    .name-box {
      display: flex;
      align-items: center;
      box-sizing: border-box;
      width: 170px;
      height: 51px;
      padding: 0 2px 2px 20px;
      border: 2px solid #c8c8c8;
      border-top: 0;
      border-left-width: 1px;
      background: #fff;
    }

    .name-box input {
      flex: 1;
      min-width: 0;
      font: 22px/28px Inter, sans-serif;
    }

    .entry {
      display: flex;
      align-items: center;
      height: 50px;
      width: 191px;
      box-sizing: border-box;
      padding: 4px 4px 0 30px;
    }

    .entry .ok {
      margin-left: 32px;
    }

    .fx {
      margin: 0 10px 0 18px;
      color: #333;
      font: italic 34px/36px 'Liberation Serif', serif;
    }

    .entry .chevron {
      opacity: 0.3;
    }

    .formula .value {
      flex: 1;
      min-width: 0;
      height: 40px;
      box-sizing: border-box;
      margin-top: 7px;
      padding-left: 14px;
      border: 1px solid #c4c4c4;
      border-radius: 4px 0 0 4px;
      background: #fdfdfd;
      color: #000;
      font: 24px/28px 'Liberation Sans', sans-serif;
    }

    .expand {
      width: 48px;
      height: 40px;
      box-sizing: border-box;
      margin-top: 7px;
      border: 2px solid #c8c8c8;
      border-radius: 4px;
      background: #fff;
    }

    .sheets {
      display: flex;
      align-items: flex-start;
      box-sizing: border-box;
      border-top: 2px solid #c8c8c8;
      border-bottom: 2px solid #c0c0c0;
      background: linear-gradient(#e8e8e8, #efefef 10px);
      color: #606060;
      font-size: 24px;
    }

    .arrows {
      display: flex;
      width: 121px;
      box-sizing: border-box;
      padding-left: 14px;
    }

    .arrow {
      width: 46px;
      height: 50px;
    }

    .sheet {
      box-sizing: border-box;
      height: 44px;
      width: 160px;
      padding-top: 4px;
      border-right: 2px solid #ccc;
      font-family: Inter, 'Noto Sans CJK JP', sans-serif;
    }

    .sheet.current {
      width: 162px;
      border: 2px solid #c8c8c8;
      border-top: 0;
      border-radius: 0 0 8px 8px;
      background: #fff;
      box-shadow: 0 1px 2px #8888;
      color: #3f8050;
      font-weight: 500;
    }

    .sheet.new {
      width: 76px;
    }

    .status {
      display: flex;
      align-items: center;
      box-sizing: border-box;
      padding: 0 48px 3px 49px;
      color: #606060;
      font-size: 22px;
    }

    .check {
      gap: 12px;
      margin-left: 42px;
    }

    .views {
      display: flex;
      align-items: center;
      margin-left: auto;
    }

    .view {
      width: 62px;
      height: 44px;
      margin-right: 11px;
      border-radius: 6px;
    }

    .view.current {
      background: #b8b8b8;
    }

    .step {
      width: 16px;
      height: 32px;
      font: 28px/32px 'Noto Sans', sans-serif;
    }

    .view + .step {
      margin-left: 8px;
    }

    .slider {
      appearance: none;
      width: 200px;
      height: 32px;
      margin: 0 14px;
    }

    .slider::-webkit-slider-runnable-track {
      height: 8px;
      border-radius: 4px;
      background: #ababab;
    }

    .slider::-webkit-slider-thumb {
      appearance: none;
      width: 32px;
      height: 32px;
      margin-top: -12px;
      border-radius: 50%;
      background: #fff;
      box-shadow: 0 1px 3px #0006;
    }

    .percent {
      margin-left: 34px;
      font: 24px/28px 'Noto Sans', sans-serif;
    }
  `

  private chevron() {
    return html`<span class="chevron">${icon('chevron')}</span>`
  }

  private tool(name: string, label: string, pressed = false) {
    return html`<button type="button" class="tool ${pressed ? 'pressed' : ''}" aria-label=${label}>${icon(name)}</button>`
  }

  private more(label: string) {
    return html`<button type="button" class="more" aria-label=${label}>${icon('chevron')}</button>`
  }

  private big(name: string, lines: string[], menu = true) {
    return html`
      <button type="button" class="big">
        <span class="picture">${icon(name)}${menu ? this.chevron() : nothing}</span>
        <span>${lines.map((line, i) => html`${i ? html`<br />` : nothing}${line}`)}</span>
      </button>
    `
  }

  private named(name: string, label: string) {
    return html`<button type="button" class="named">${icon(name)}<span>${label}</span>${icon('chevron')}</button>`
  }

  private renderTitle() {
    return html`
      <header class="titlebar">
        <div class="quick">
          <label class="autosave">自動保存<input class="switch" type="checkbox" /></label>
          <button type="button" aria-label="ホーム">${icon('home')}</button>
          <button type="button" aria-label="保存">${icon('save')}</button>
          <button type="button" aria-label="名前を付けて保存">${icon('save-edit')}</button>
          <button type="button" class="undo" aria-label="元に戻す">${icon('undo')}${icon('chevron')}</button>
          <button type="button" aria-label="やり直し">${icon('redo')}</button>
          <button type="button" aria-label="その他">${icon('dots')}</button>
        </div>
        <button type="button" class="file">${icon('file')}${this.fileName}${this.chevron()}</button>
        <label class="search">${icon('search')}<input type="search" aria-label="Search" placeholder="Search (Cmd + Ctrl + U)" /></label>
      </header>
    `
  }

  private renderTabs() {
    return html`
      <nav class="tabs">
        ${tabs.map((name) => html`
          <button type="button" class=${classMap({ tab: true, current: name === this.tab })} @click=${() => { this.tab = name }}>${name}</button>
        `)}
        <div class="actions">
          <button type="button" class="action">${icon('comment')}コメント</button>
          <button type="button" class="action share">${icon('share')}共有${this.chevron()}</button>
        </div>
      </nav>
    `
  }

  private renderRibbon() {
    return html`
      <section class="ribbon">
        <div class="group clipboard">
          ${this.big('paste', ['ペースト'])}
          <div class="stack">
            <div class="line">${this.tool('cut', '切り取り')}</div>
            <div class="line">${this.tool('copy', 'コピー')}${this.more('コピーのオプション')}</div>
            <div class="line">${this.tool('painter', '書式のコピー')}</div>
          </div>
        </div>
        <span class="divider"></span>
        <div class="group fonts">
          <div class="rows">
            <div class="line">
              <span class="combo family"><select aria-label="フォント"><option>ヒラギノ明朝 ProN</option></select>${icon('chevron')}</span>
              <span class="combo size"><select aria-label="フォント サイズ"><option>10</option></select>${icon('chevron')}</span>
              ${this.tool('grow', '拡大')}
              <span class="gap"></span>
              ${this.tool('shrink', '縮小')}
            </div>
            <div class="line">
              <button type="button" class="letter b">B</button>
              <button type="button" class="letter i">I</button>
              <button type="button" class="letter u">U</button>
              ${this.more('下線')}
              <span class="rule"></span>
              ${this.tool('borders', '罫線')}${this.more('罫線の種類')}
              <span class="rule"></span>
              ${this.tool('fill', '塗りつぶし')}${this.more('塗りつぶしの色')}
              <span class="gap"></span>
              ${this.tool('color', '文字色')}${this.more('文字色の選択')}
              <span class="rule"></span>
              <button type="button" class="tool" aria-label="ふりがな">
                <svg class="glyph" width="34" height="34" viewBox="0 0 34 34"><text x="0" y="14" font-size="16">abc</text><path d="m15 33 12-21h3v21M19 26h11" fill="none" stroke="#3f8ace" stroke-width="2"/></svg>
              </button>
              ${this.more('ふりがなの設定')}
            </div>
          </div>
        </div>
        <span class="divider"></span>
        <div class="group aligning">
          <div class="rows">
            <div class="line">
              ${this.tool('top', '上揃え')}<span class="gap"></span>
              ${this.tool('middle', '上下中央揃え', true)}<span class="gap"></span>
              ${this.tool('bottom', '下揃え')}
              <span class="rule"></span>
              <button type="button" class="tool" aria-label="方向">
                <svg class="glyph" width="34" height="34" viewBox="0 0 34 34"><text x="0" y="0" font-size="20" transform="translate(7 24) rotate(-50)">ab</text><path d="M12 32 32 9M23 8h9v9" fill="none" stroke="#3f8ace" stroke-width="2"/></svg>
              </button>
              ${this.more('方向の選択')}
            </div>
            <div class="line">
              ${this.tool('left', '左揃え', true)}<span class="gap"></span>
              ${this.tool('center', '中央揃え')}<span class="gap"></span>
              ${this.tool('right', '右揃え')}
              <span class="rule"></span>
              ${this.tool('outdent', 'インデントを減らす')}<span class="gap"></span>
              ${this.tool('indent', 'インデントを増やす')}
            </div>
          </div>
        </div>
        <span class="divider"></span>
        <div class="group wrapping">
          <div class="rows">
            <button type="button" class="wide">
              <svg class="glyph" width="32" height="34" viewBox="0 0 32 34"><text x="1" y="16" font-size="21">ab</text><text x="1" y="31" font-size="21">c</text><path d="M27 17c1 7-3 10-12 10m5-6-5 6 5 5" fill="none" stroke="#3f8ace" stroke-width="2.5"/></svg>
              <span>折り返して全体を表示する</span>${icon('chevron')}
            </button>
            <div class="line">
              <button type="button" class="wide merge pressed">${icon('merge')}<span>セルを結合して中央揃え</span></button>
              <button type="button" class="merge-more" aria-label="結合の種類">${icon('chevron')}</button>
            </div>
          </div>
        </div>
        <span class="divider"></span>
        <div class="group numbers">
          <div class="rows">
            <span class="combo number"><select aria-label="表示形式"><option>標準</option></select>${icon('chevron')}</span>
            <div class="line">
              ${this.tool('currency', '通貨')}${this.more('通貨の種類')}<span class="gap"></span>
              ${this.tool('percent', 'パーセント')}<span class="gap"></span>
              ${this.tool('comma', '桁区切り')}
              <span class="rule"></span>
              <button type="button" class="tool" aria-label="小数点以下を増やす">
                <svg class="glyph" width="34" height="34" viewBox="0 0 34 34"><text x="18" y="15" font-size="18">.0</text><text x="7" y="32" font-size="18">.00</text><path d="M18 10H2m6-6-6 6 6 6" fill="none" stroke="#3f8ace" stroke-width="2"/></svg>
              </button>
              <span class="gap"></span>
              <button type="button" class="tool" aria-label="小数点以下を減らす">
                <svg class="glyph" width="34" height="34" viewBox="0 0 34 34"><text x="7" y="15" font-size="18">.00</text><text x="18" y="32" font-size="18">.0</text><path d="M1 25h16m-6-6 6 6-6 6" fill="none" stroke="#3f8ace" stroke-width="2"/></svg>
              </button>
            </div>
          </div>
        </div>
        <span class="divider"></span>
        <div class="group looks">
          ${this.big('conditional', ['条件付き', '書式'])}
          ${this.big('table', ['テーブルと', 'して書式設定'])}
          ${this.big('styles', ['セルの', 'スタイル'])}
        </div>
        <span class="divider"></span>
        <div class="group cells">
          <div class="stack">
            ${this.named('insert', '挿入')}
            ${this.named('delete', '削除')}
            ${this.named('format', '書式')}
          </div>
        </div>
        <span class="divider"></span>
        <div class="group editing">
          <div class="stack">
            <div class="line">${this.tool('sum', '合計')}${this.more('関数')}</div>
            <div class="line">${this.tool('down', 'フィル')}${this.more('フィルの種類')}</div>
            <div class="line">${this.tool('eraser', 'クリア')}${this.more('クリアの種類')}</div>
          </div>
          ${this.big('sort', ['並べ替えと', 'フィルター'])}
          ${this.big('find', ['検索と', '選択'])}
        </div>
        <span class="divider"></span>
        <div class="group addins">${this.big('addin', ['アド', 'イン'], false)}</div>
      </section>
    `
  }

  private renderFormula() {
    return html`
      <section class="formula">
        <div class="name-box"><input type="text" aria-label="名前ボックス" .value=${'P20'} />${icon('spinner')}</div>
        <div class="entry">
          <button type="button" aria-label="キャンセル">${icon('cancel')}</button>
          <button type="button" class="ok" aria-label="入力">${icon('enter')}</button>
          <button type="button" class="fx">fx</button>
          ${this.chevron()}
        </div>
        <input class="value" type="text" aria-label="数式バー" .value=${'=DATA!C3'} />
        <button type="button" class="expand" aria-label="数式バーを展開">${icon('caret')}</button>
      </section>
    `
  }

  private renderSheets() {
    return html`
      <nav class="sheets">
        <div class="arrows">
          <button type="button" class="arrow" aria-label="前のシート">${icon('prev')}</button>
          <button type="button" class="arrow" aria-label="次のシート">${icon('next')}</button>
        </div>
        <button type="button" class="sheet current">自動更新</button>
        <button type="button" class="sheet">DATA</button>
        <button type="button" class="sheet new" aria-label="シートの追加">${icon('plus')}</button>
      </nav>
    `
  }

  private renderStatus() {
    return html`
      <footer class="status">
        <span>準備完了</span>
        <button type="button" class="check">${icon('access')}アクセシビリティ: 検討が必要です</button>
        <div class="views">
          <button type="button" class="view current" aria-label="標準">${icon('grid')}</button>
          <button type="button" class="view" aria-label="ページ レイアウト">${icon('page')}</button>
          <button type="button" class="view" aria-label="改ページ プレビュー">${icon('breaks')}</button>
          <button type="button" class="step" aria-label="縮小">−</button>
          <input class="slider" type="range" min="0" max="200" aria-label="ズーム" .value=${String(this.zoom)}
            @input=${(event: Event) => { this.zoom = Number((event.currentTarget as HTMLInputElement).value) }} />
          <button type="button" class="step" aria-label="拡大">+</button>
          <span class="percent">${this.zoom}%</span>
        </div>
      </footer>
    `
  }

  render() {
    return html`
      ${this.renderTitle()}
      ${this.renderTabs()}
      ${this.renderRibbon()}
      ${this.renderFormula()}
      <sheet-grid></sheet-grid>
      ${this.renderSheets()}
      ${this.renderStatus()}
    `
  }
}
